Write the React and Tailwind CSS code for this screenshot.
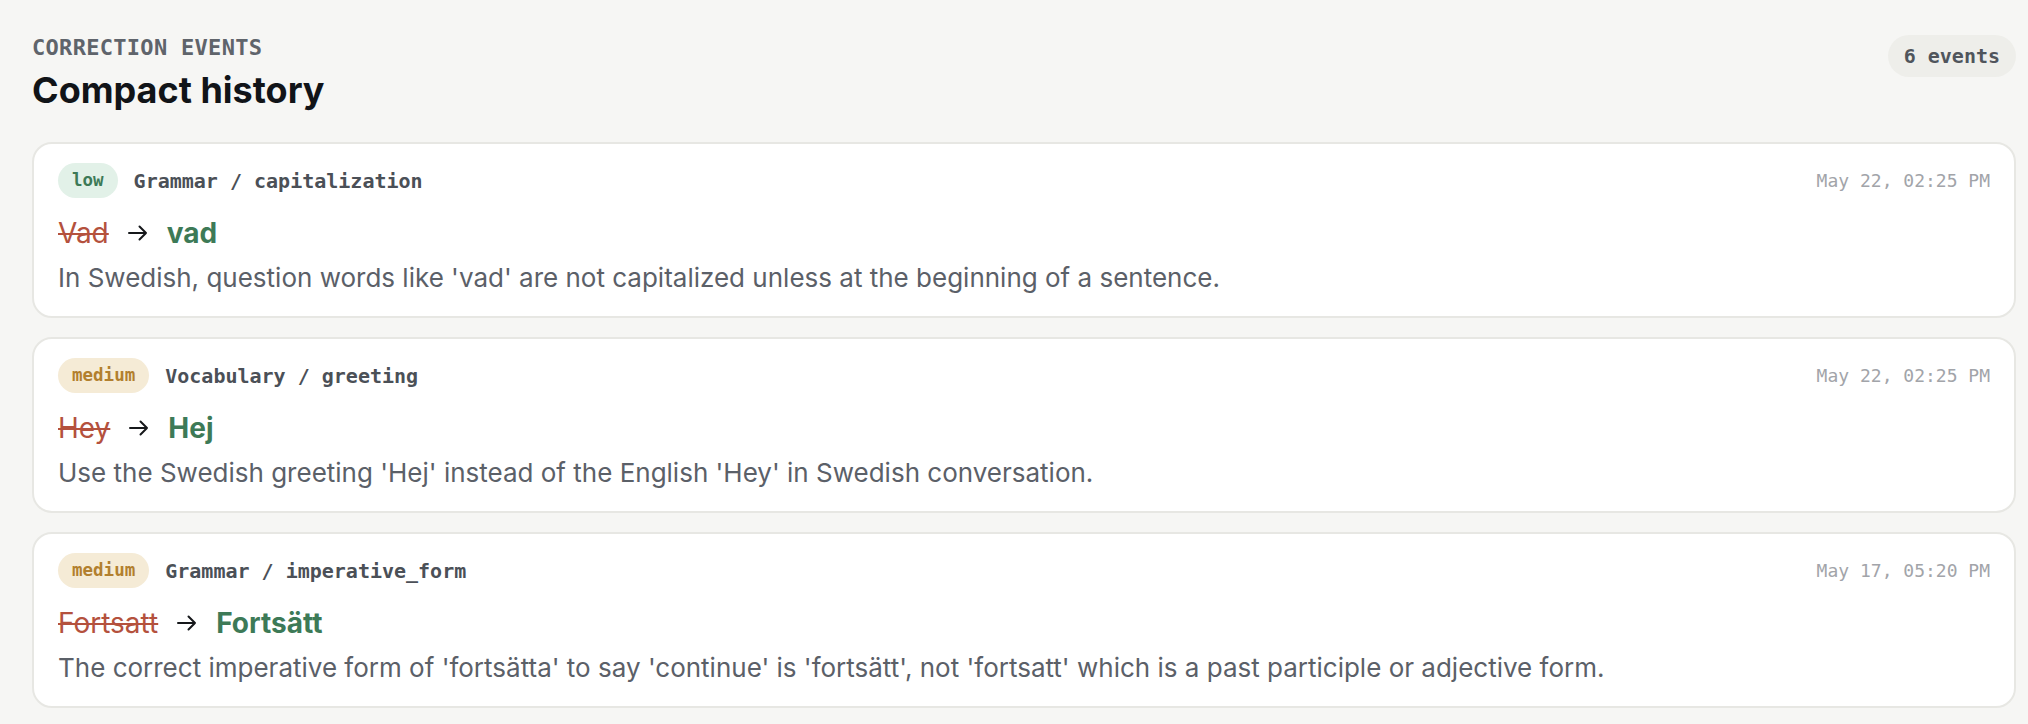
const MONO = "font-['DejaVu_Sans_Mono',monospace]";

const events = [
  {
    id: 1,
    severity: 'low',
    category: 'Grammar / capitalization',
    time: 'May 22, 02:25 PM',
    from: 'Vad',
    to: 'vad',
    note: "In Swedish, question words like 'vad' are not capitalized unless at the beginning of a sentence.",
  },
  {
    id: 2,
    severity: 'medium',
    category: 'Vocabulary / greeting',
    time: 'May 22, 02:25 PM',
    from: 'Hey',
    to: 'Hej',
    note: "Use the Swedish greeting 'Hej' instead of the English 'Hey' in Swedish conversation.",
  },
  {
    id: 3,
    severity: 'medium',
    category: 'Grammar / imperative_form',
    time: 'May 17, 05:20 PM',
    from: 'Fortsatt',
    to: 'Fortsätt',
    note: "The correct imperative form of 'fortsätta' to say 'continue' is 'fortsätt', not 'fortsatt' which is a past participle or adjective form.",
  },
];

const severityStyles = {
  low: 'bg-[#e2f1e8] text-[#3d7a57]',
  medium: 'bg-[#f5ebd6] text-[#b27f2e]',
};

function Arrow() {
  return (
    <svg width="20" height="16" viewBox="0 0 20 16" fill="none" className="shrink-0">
      <path d="M1 8h17M11.5 1.5 18 8l-6.5 6.5" stroke="#16181b" strokeWidth="2" strokeLinecap="round" strokeLinejoin="round" />
    </svg>
  );
}

function EventCard({ event }) {
  return (
    <div className="bg-white border-2 border-[#e7e7e3] rounded-[20px] px-6 pt-[19px] pb-5">
      {/* Meta row */}
      <div className="flex items-center justify-between h-[35px]">
        <div className="flex items-center gap-4">
          <span
            className={`${MONO} ${severityStyles[event.severity]} h-[35px] px-[14px] rounded-full flex items-center text-[17.5px] font-bold`}
          >
            {event.severity}
          </span>
          <span className={`${MONO} text-[20px] font-bold text-[#4b5057]`}>{event.category}</span>
        </div>
        <span className={`${MONO} text-[18px] text-[#a2a4a9]`}>{event.time}</span>
      </div>

      {/* Correction */}
      <div className="mt-[18px] h-[34px] flex items-center gap-[19px] font-['Inter',sans-serif] text-[28px] leading-[34px]">
        <span className="text-[#b4513d] line-through decoration-[#b4513d] decoration-2">{event.from}</span>
        <Arrow />
        <span className="text-[#3d7a57] font-bold">{event.to}</span>
      </div>

      {/* Explanation */}
      <p className="mt-[10px] font-['Inter',sans-serif] text-[26px] leading-[36px] text-[#5b6068]">{event.note}</p>
    </div>
  );
}

export default function App() {
  return (
    <div className="min-h-screen bg-[#f6f6f4] pl-8 pr-3 pt-[35px] pb-6">
      <div className="flex items-start justify-between">
        <div>
          <div className={`${MONO} text-[22px] leading-[26px] font-bold tracking-[0.3px] text-[#5f646b] uppercase`}>
            Correction events
          </div>
          <h1 className="mt-[7px] font-['Inter',sans-serif] text-[36px] leading-[44px] font-bold text-[#111418]">
            Compact history
          </h1>
        </div>
        <span className={`${MONO} h-[42px] px-4 rounded-full bg-[#eeeeea] flex items-center text-[20px] font-bold text-[#50555c]`}>
          6 events
        </span>
      </div>

      <div className="mt-[30px] flex flex-col gap-[19px]">
        {events.map((event) => (
          <EventCard key={event.id} event={event} />
        ))}
      </div>
    </div>
  );
}
